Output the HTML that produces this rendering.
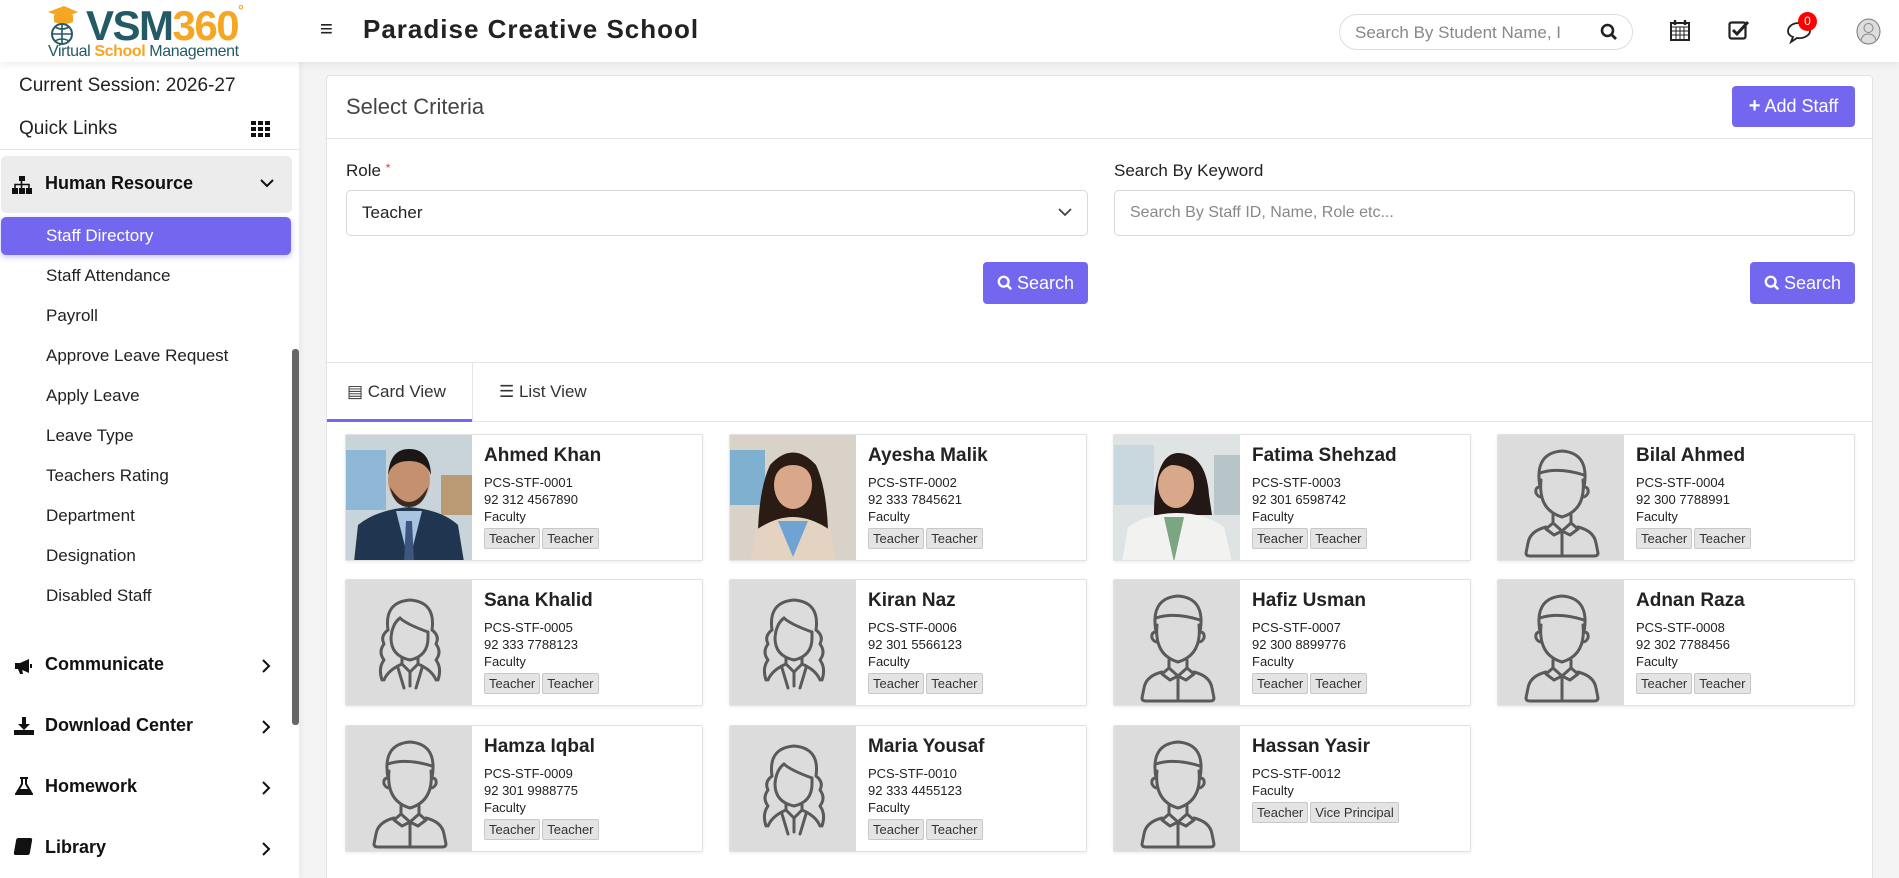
<!DOCTYPE html>
<html style="width:1899px;height:878px;overflow:hidden"><head><meta charset="utf-8">
<style>
*{box-sizing:border-box;margin:0;padding:0}
body{width:1899px;height:878px;overflow:hidden;background:#f4f4f5;font-family:"Liberation Sans",sans-serif;color:#222;position:relative}
.abs{position:absolute}
#hdr{left:0;top:0;width:1899px;height:62px;background:#fff;box-shadow:0 2px 8px rgba(0,0,0,.08);z-index:5}
#side{left:0;top:62px;width:299px;height:816px;background:#fff;box-shadow:2px 0 6px rgba(0,0,0,.05)}
.sub{position:absolute;left:46px;font-size:17px;color:#222}
.mi{position:absolute;left:45px;font-size:18px;font-weight:bold;color:#111}
.chev{position:absolute;left:262px}
#panel{left:326px;top:75px;width:1547px;height:803px;background:#fff;border:1px solid #e3e3e3;border-bottom:none;border-radius:4px 4px 0 0}
.btn{position:absolute;background:#7367f0;color:#fff;border-radius:4px;font-size:18px;display:flex;align-items:center;justify-content:center}
.inp{position:absolute;height:46px;border:1px solid #d8d8d8;border-radius:5px;font-size:17px;padding:0 15px;display:flex;align-items:center}
.card{position:absolute;width:358px;height:127px;background:#fff;border:1px solid #e2e2e2;box-shadow:0 1px 3px rgba(0,0,0,.08);border-radius:2px;overflow:hidden}
.ph{position:absolute;left:0;top:0;width:126px;height:127px;background:#dcdcdc}
.inf{position:absolute;left:138px;top:6px}
.nm{font-size:19px;font-weight:bold;color:#222;height:30px;line-height:30px}
.dt{font-size:13px;line-height:17px;margin-top:3px;color:#222}
.tg{display:inline-block;background:#e4e4e4;border:1px solid #c8c8c8;border-radius:2px;font-size:13px;padding:1px 4px;margin-top:3px;margin-right:2px;color:#333}
.dl{line-height:17px}
</style></head><body>

<div id="hdr" class="abs">
  <svg class="abs" style="left:44px;top:4px" width="34" height="42" viewBox="0 0 34 42">
    <path d="M4 8 L20 2 L34 8 L20 14 Z" fill="#f5a623"/><path d="M10 11 V18 Q20 22 29 18 V11" fill="#f5a623"/>
    <circle cx="18" cy="30" r="10" fill="none" stroke="#245a66" stroke-width="2"/><path d="M8 30 H28 M18 20 V40 M11 23 Q18 27 25 23 M11 37 Q18 33 25 37" stroke="#245a66" stroke-width="1.6" fill="none"/>
  </svg>
  <div class="abs" style="left:86px;top:2px;font-size:42px;font-weight:900;color:#245a66;letter-spacing:-1.5px">VSM<span style="color:#f5a623">360</span><span style="color:#f5a623;font-size:14px;vertical-align:top">°</span></div>
  <div class="abs" style="left:48px;top:43px;font-size:16px;color:#245a66;letter-spacing:-.4px">Virtual <b style="color:#f5a623">School</b> Management</div>
  <div class="abs" style="left:320px;top:16px;font-size:22px;font-weight:bold">≡</div>
  <div class="abs" style="left:363px;top:14px;font-size:26px;font-weight:bold;letter-spacing:1px;color:#222">Paradise Creative School</div>
  <div class="abs" style="left:1339px;top:14px;width:294px;height:36px;border:1px solid #ddd;border-radius:18px;font-size:17px;color:#888;padding:8px 0 0 15px">Search By Student Name, I</div>
  <svg class="abs" style="left:1600px;top:23px" width="18" height="18" viewBox="0 0 18 18"><circle cx="7.5" cy="7.5" r="5.5" fill="none" stroke="#222" stroke-width="2.6"/><path d="M11.5 11.5 L16 16" stroke="#222" stroke-width="2.8"/></svg>
  <svg class="abs" style="left:1670px;top:19px" width="20" height="22" viewBox="0 0 20 22"><rect x="1" y="4" width="18" height="17" fill="none" stroke="#222" stroke-width="2"/><path d="M1 8 H19 M1 12 H19 M1 16 H19 M6 8 V21 M10 8 V21 M14 8 V21" stroke="#222" stroke-width="1"/><path d="M5 1 V6 M15 1 V6" stroke="#222" stroke-width="2.4"/></svg>
  <svg class="abs" style="left:1728px;top:19px" width="22" height="22" viewBox="0 0 22 22"><rect x="1.5" y="3.5" width="16" height="16" rx="2" fill="none" stroke="#222" stroke-width="2.2"/><path d="M5 11 L9 15 L20 3" fill="none" stroke="#222" stroke-width="3"/></svg>
  <svg class="abs" style="left:1786px;top:20px" width="26" height="24" viewBox="0 0 26 24"><path d="M13 3 C6 3 2 7 2 11 C2 14 4 16 7 17 L5 22 L11 18 C18 19 24 15 24 11 C24 7 19 3 13 3 Z" fill="none" stroke="#222" stroke-width="1.8"/></svg>
  <div class="abs" style="left:1798px;top:12px;width:19px;height:19px;border-radius:50%;background:#f00;color:#fff;font-size:12px;text-align:center;line-height:19px">0</div>
  <svg class="abs" style="left:1856px;top:18px" width="25" height="27" viewBox="0 0 25 27"><ellipse cx="12.5" cy="13.5" rx="11.5" ry="12.5" fill="#ddd" stroke="#777"/><circle cx="12.5" cy="10" r="4.5" fill="none" stroke="#888"/><path d="M5 23 Q6 16 12.5 16 Q19 16 20 23" fill="none" stroke="#888"/></svg>
</div>

<div id="side" class="abs">
  <div class="abs" style="left:19px;top:13px;font-size:19px">Current Session: 2026-27</div>
  <div class="abs" style="left:19px;top:56px;font-size:19px">Quick Links</div>
  <svg class="abs" style="left:251px;top:59px" width="20" height="17" viewBox="0 0 20 17"><g fill="#111"><rect x="0" y="0" width="5" height="4"/><rect x="7" y="0" width="5" height="4"/><rect x="14" y="0" width="5" height="4"/><rect x="0" y="6" width="5" height="4"/><rect x="7" y="6" width="5" height="4"/><rect x="14" y="6" width="5" height="4"/><rect x="0" y="12" width="5" height="4"/><rect x="7" y="12" width="5" height="4"/><rect x="14" y="12" width="5" height="4"/></g></svg>
  <div class="abs" style="left:0;top:87px;width:299px;height:1px;background:#e5e5e5"></div>
  <div class="abs" style="left:1px;top:94px;width:291px;height:57px;background:#ececec;border-radius:5px"></div>
  <svg class="abs" style="left:12px;top:114px" width="20" height="18" viewBox="0 0 20 18"><g fill="#111"><rect x="7" y="0" width="6" height="5"/><rect x="0" y="12" width="6" height="6"/><rect x="7" y="12" width="6" height="6"/><rect x="14" y="12" width="6" height="6"/><path d="M9.5 5 V12 M3 12 V8.5 H17 V12" stroke="#111" stroke-width="1.6" fill="none"/></g></svg>
  <div class="mi" style="top:111px">Human Resource</div>
  <svg class="abs" style="left:260px;top:117px" width="14" height="9" viewBox="0 0 14 9"><path d="M1 1 L7 7 L13 1" fill="none" stroke="#111" stroke-width="2"/></svg>
  <div class="abs" style="left:1px;top:155px;width:290px;height:38px;background:#7367f0;border-radius:5px;box-shadow:0 2px 6px rgba(115,103,240,.4)"></div>
  <div class="sub" style="top:164px;color:#fff">Staff Directory</div>
  <div class="sub" style="top:204px">Staff Attendance</div>
  <div class="sub" style="top:244px">Payroll</div>
  <div class="sub" style="top:284px">Approve Leave Request</div>
  <div class="sub" style="top:324px">Apply Leave</div>
  <div class="sub" style="top:364px">Leave Type</div>
  <div class="sub" style="top:404px">Teachers Rating</div>
  <div class="sub" style="top:444px">Department</div>
  <div class="sub" style="top:484px">Designation</div>
  <div class="sub" style="top:524px">Disabled Staff</div>
  <div class="abs" style="left:292px;top:287px;width:7px;height:376px;background:#666;border-radius:3px"></div>
  <svg class="abs" style="left:14px;top:596px" width="20" height="17" viewBox="0 0 20 17"><path d="M1 5 H6 L15 1 V15 L6 11 H1 Z" fill="#111"/><path d="M4 11 L6 16 H9 L8 11" fill="#111"/><path d="M17 6 V10" stroke="#111" stroke-width="2"/></svg>
  <div class="mi" style="top:592px">Communicate</div>
  <svg class="chev" style="top:597px" width="9" height="14" viewBox="0 0 9 14"><path d="M1 1 L7 7 L1 13" fill="none" stroke="#111" stroke-width="2"/></svg>
  <svg class="abs" style="left:14px;top:655px" width="20" height="18" viewBox="0 0 20 18"><path d="M8 0 H12 V7 H16 L10 13 L4 7 H8 Z" fill="#111"/><rect x="0" y="13" width="20" height="5" fill="#111"/></svg>
  <div class="mi" style="top:653px">Download Center</div>
  <svg class="chev" style="top:658px" width="9" height="14" viewBox="0 0 9 14"><path d="M1 1 L7 7 L1 13" fill="none" stroke="#111" stroke-width="2"/></svg>
  <svg class="abs" style="left:15px;top:715px" width="18" height="19" viewBox="0 0 18 19"><path d="M5 1 H13 M7 1 V7 L1 17 H17 L11 7 V1" fill="none" stroke="#111" stroke-width="2"/><path d="M4 12 H14 L16 17 H2 Z" fill="#111"/></svg>
  <div class="mi" style="top:714px">Homework</div>
  <svg class="chev" style="top:719px" width="9" height="14" viewBox="0 0 9 14"><path d="M1 1 L7 7 L1 13" fill="none" stroke="#111" stroke-width="2"/></svg>
  <div class="abs" style="left:15px;top:776px;width:16px;height:17px;background:#111;border-radius:2px;transform:skewX(-10deg)"></div>
  <div class="mi" style="top:775px">Library</div>
  <svg class="chev" style="top:780px" width="9" height="14" viewBox="0 0 9 14"><path d="M1 1 L7 7 L1 13" fill="none" stroke="#111" stroke-width="2"/></svg>
</div>

<div id="panel" class="abs">
  <div class="abs" style="left:19px;top:18px;font-size:22px;color:#444">Select Criteria</div>
  <div class="btn" style="left:1405px;top:10px;width:123px;height:41px;font-size:18px"><b style="font-size:20px;margin-right:4px">+</b>Add Staff</div>
  <div class="abs" style="left:0;top:62px;width:1545px;height:1px;background:#e5e5e5"></div>
  <div class="abs" style="left:19px;top:85px;font-size:17px">Role <span style="color:#e33;font-size:12px;vertical-align:top">*</span></div>
  <div class="inp" style="left:19px;top:114px;width:742px">Teacher</div>
  <svg class="abs" style="left:731px;top:132px" width="14" height="9" viewBox="0 0 14 9"><path d="M1 1 L7 7 L13 1" fill="none" stroke="#444" stroke-width="1.8"/></svg>
  <div class="abs" style="left:787px;top:85px;font-size:17px">Search By Keyword</div>
  <div class="inp" style="left:787px;top:114px;width:741px;color:#888;font-size:16px">Search By Staff ID, Name, Role etc...</div>
  <div class="btn" style="left:656px;top:186px;width:105px;height:42px"><svg width="16" height="16" viewBox="0 0 18 18" style="margin-right:4px"><circle cx="7.5" cy="7.5" r="5.5" fill="none" stroke="#fff" stroke-width="2.6"/><path d="M11.5 11.5 L16 16" stroke="#fff" stroke-width="2.8"/></svg>Search</div>
  <div class="btn" style="left:1423px;top:186px;width:105px;height:42px"><svg width="16" height="16" viewBox="0 0 18 18" style="margin-right:4px"><circle cx="7.5" cy="7.5" r="5.5" fill="none" stroke="#fff" stroke-width="2.6"/><path d="M11.5 11.5 L16 16" stroke="#fff" stroke-width="2.8"/></svg>Search</div>
  <div class="abs" style="left:0;top:286px;width:1545px;height:1px;background:#e5e5e5"></div>
  <div class="abs" style="left:145px;top:287px;width:1px;height:58px;background:#e5e5e5"></div>
  <div class="abs" style="left:0;top:345px;width:1545px;height:1px;background:#e5e5e5"></div>
  <div class="abs" style="left:0;top:343px;width:145px;height:3px;background:#7367f0"></div>
  <div class="abs" style="left:20px;top:306px;font-size:17px;color:#333">▤ Card View</div>
  <div class="abs" style="left:172px;top:306px;font-size:17px;color:#333">☰ List View</div>
</div>

<div class="card" style="left:345px;top:434px"><div class="ph"><svg width="126" height="127"><rect width="126" height="127" fill="#c8d3da"/><rect x="0" y="15" width="40" height="60" fill="#8fb8d6"/><rect x="95" y="40" width="31" height="40" fill="#b99a74"/><path d="M8 127 L12 90 Q30 75 63 72 Q96 75 112 90 L118 127 Z" fill="#1f3550"/><path d="M50 76 L63 127 L76 76 Z" fill="#a8c4e0"/><path d="M60 86 L66 86 L68 127 L58 127 Z" fill="#3d5680"/><ellipse cx="63" cy="45" rx="21" ry="26" fill="#c49070"/><path d="M42 40 Q44 14 63 14 Q84 14 85 40 Q80 26 63 26 Q46 26 42 40 Z" fill="#1c1714"/><path d="M44 52 Q63 82 82 52 Q78 72 63 72 Q48 72 44 52Z" fill="#3a2a22"/></svg></div><div class="inf"><div class="nm">Ahmed Khan</div><div class="dt"><div class="dl">PCS-STF-0001</div><div class="dl">92 312 4567890</div><div class="dl">Faculty</div><span class="tg">Teacher</span><span class="tg">Teacher</span></div></div></div>

<div class="card" style="left:729px;top:434px"><div class="ph"><svg width="126" height="127"><rect width="126" height="127" fill="#d9d2c8"/><rect x="0" y="15" width="35" height="55" fill="#7fb0cf"/><path d="M28 127 Q26 60 40 30 Q63 5 86 30 Q100 60 98 127 Z" fill="#2a1b14"/><path d="M20 127 L26 95 Q45 82 63 82 Q81 82 100 95 L106 127 Z" fill="#e3d3c0"/><path d="M48 86 L63 122 L78 86 Z" fill="#6fa3d4"/><ellipse cx="63" cy="50" rx="19" ry="24" fill="#d9a88a"/><path d="M44 45 Q50 22 63 22 Q76 22 82 45 Q78 30 63 30 Q48 30 44 45Z" fill="#2a1b14"/></svg></div><div class="inf"><div class="nm">Ayesha Malik</div><div class="dt"><div class="dl">PCS-STF-0002</div><div class="dl">92 333 7845621</div><div class="dl">Faculty</div><span class="tg">Teacher</span><span class="tg">Teacher</span></div></div></div>

<div class="card" style="left:1113px;top:434px"><div class="ph"><svg width="126" height="127"><rect width="126" height="127" fill="#dfe3e4"/><rect x="0" y="10" width="40" height="60" fill="#c9d8df"/><rect x="100" y="20" width="26" height="60" fill="#b7c4c8"/><path d="M40 80 Q40 20 63 18 Q92 18 95 60 L98 80 Z" fill="#231815"/><path d="M8 127 L14 92 Q35 78 63 78 Q91 78 110 92 L118 127 Z" fill="#f2f2f0"/><path d="M50 82 L60 127 L70 82 Z" fill="#7aa782"/><ellipse cx="62" cy="50" rx="18" ry="23" fill="#d9a88a"/><path d="M44 45 Q48 22 63 22 Q78 24 82 42 Q72 30 58 30 Q48 32 44 45Z" fill="#231815"/></svg></div><div class="inf"><div class="nm">Fatima Shehzad</div><div class="dt"><div class="dl">PCS-STF-0003</div><div class="dl">92 301 6598742</div><div class="dl">Faculty</div><span class="tg">Teacher</span><span class="tg">Teacher</span></div></div></div>

<div class="card" style="left:1497px;top:434px"><div class="ph"><svg width="126" height="127" viewBox="0 0 126 127" fill="none" stroke="#5a5a5a" stroke-width="3" stroke-linecap="round" stroke-linejoin="round"><path d="M42 52 Q36 18 64 16 Q92 18 86 52"/><path d="M42 38 Q60 32 86 40"/><path d="M43 45 Q40 75 64 82 Q88 75 85 45"/><path d="M42 52 Q37 52 38 58 Q40 62 43 62 M86 52 Q91 52 90 58 Q88 62 85 62"/><path d="M55 80 V88 L64 96 L73 88 V80"/><path d="M55 88 L48 94 L56 100 L64 96 L72 100 L80 94 L73 88"/><path d="M48 92 Q32 96 30 108 L28 118 Q28 121 32 121 H96 Q100 121 100 118 L98 108 Q96 96 80 92"/><path d="M64 96 V119"/></svg></div><div class="inf"><div class="nm">Bilal Ahmed</div><div class="dt"><div class="dl">PCS-STF-0004</div><div class="dl">92 300 7788991</div><div class="dl">Faculty</div><span class="tg">Teacher</span><span class="tg">Teacher</span></div></div></div>

<div class="card" style="left:345px;top:579px"><div class="ph"><svg width="126" height="127" viewBox="0 0 126 127" fill="none" stroke="#5a5a5a" stroke-width="3" stroke-linecap="round" stroke-linejoin="round"><path d="M42 50 Q38 22 64 20 Q90 22 86 50 Q94 56 90 64 Q96 72 90 80 Q96 88 92 100"/><path d="M42 50 Q34 56 38 64 Q32 72 38 80 Q32 88 36 100"/><path d="M54 38 Q60 44 82 52"/><path d="M54 38 Q46 44 45 58 Q45 76 64 80 Q82 76 82 58 V52"/><path d="M56 78 V84 L64 92 L72 84 V78"/><path d="M38 100 Q42 90 56 84 M90 100 Q86 90 72 84"/><path d="M52 88 L58 108 M76 88 L70 108 M64 92 V106"/></svg></div><div class="inf"><div class="nm">Sana Khalid</div><div class="dt"><div class="dl">PCS-STF-0005</div><div class="dl">92 333 7788123</div><div class="dl">Faculty</div><span class="tg">Teacher</span><span class="tg">Teacher</span></div></div></div>

<div class="card" style="left:729px;top:579px"><div class="ph"><svg width="126" height="127" viewBox="0 0 126 127" fill="none" stroke="#5a5a5a" stroke-width="3" stroke-linecap="round" stroke-linejoin="round"><path d="M42 50 Q38 22 64 20 Q90 22 86 50 Q94 56 90 64 Q96 72 90 80 Q96 88 92 100"/><path d="M42 50 Q34 56 38 64 Q32 72 38 80 Q32 88 36 100"/><path d="M54 38 Q60 44 82 52"/><path d="M54 38 Q46 44 45 58 Q45 76 64 80 Q82 76 82 58 V52"/><path d="M56 78 V84 L64 92 L72 84 V78"/><path d="M38 100 Q42 90 56 84 M90 100 Q86 90 72 84"/><path d="M52 88 L58 108 M76 88 L70 108 M64 92 V106"/></svg></div><div class="inf"><div class="nm">Kiran Naz</div><div class="dt"><div class="dl">PCS-STF-0006</div><div class="dl">92 301 5566123</div><div class="dl">Faculty</div><span class="tg">Teacher</span><span class="tg">Teacher</span></div></div></div>

<div class="card" style="left:1113px;top:579px"><div class="ph"><svg width="126" height="127" viewBox="0 0 126 127" fill="none" stroke="#5a5a5a" stroke-width="3" stroke-linecap="round" stroke-linejoin="round"><path d="M42 52 Q36 18 64 16 Q92 18 86 52"/><path d="M42 38 Q60 32 86 40"/><path d="M43 45 Q40 75 64 82 Q88 75 85 45"/><path d="M42 52 Q37 52 38 58 Q40 62 43 62 M86 52 Q91 52 90 58 Q88 62 85 62"/><path d="M55 80 V88 L64 96 L73 88 V80"/><path d="M55 88 L48 94 L56 100 L64 96 L72 100 L80 94 L73 88"/><path d="M48 92 Q32 96 30 108 L28 118 Q28 121 32 121 H96 Q100 121 100 118 L98 108 Q96 96 80 92"/><path d="M64 96 V119"/></svg></div><div class="inf"><div class="nm">Hafiz Usman</div><div class="dt"><div class="dl">PCS-STF-0007</div><div class="dl">92 300 8899776</div><div class="dl">Faculty</div><span class="tg">Teacher</span><span class="tg">Teacher</span></div></div></div>

<div class="card" style="left:1497px;top:579px"><div class="ph"><svg width="126" height="127" viewBox="0 0 126 127" fill="none" stroke="#5a5a5a" stroke-width="3" stroke-linecap="round" stroke-linejoin="round"><path d="M42 52 Q36 18 64 16 Q92 18 86 52"/><path d="M42 38 Q60 32 86 40"/><path d="M43 45 Q40 75 64 82 Q88 75 85 45"/><path d="M42 52 Q37 52 38 58 Q40 62 43 62 M86 52 Q91 52 90 58 Q88 62 85 62"/><path d="M55 80 V88 L64 96 L73 88 V80"/><path d="M55 88 L48 94 L56 100 L64 96 L72 100 L80 94 L73 88"/><path d="M48 92 Q32 96 30 108 L28 118 Q28 121 32 121 H96 Q100 121 100 118 L98 108 Q96 96 80 92"/><path d="M64 96 V119"/></svg></div><div class="inf"><div class="nm">Adnan Raza</div><div class="dt"><div class="dl">PCS-STF-0008</div><div class="dl">92 302 7788456</div><div class="dl">Faculty</div><span class="tg">Teacher</span><span class="tg">Teacher</span></div></div></div>

<div class="card" style="left:345px;top:725px"><div class="ph"><svg width="126" height="127" viewBox="0 0 126 127" fill="none" stroke="#5a5a5a" stroke-width="3" stroke-linecap="round" stroke-linejoin="round"><path d="M42 52 Q36 18 64 16 Q92 18 86 52"/><path d="M42 38 Q60 32 86 40"/><path d="M43 45 Q40 75 64 82 Q88 75 85 45"/><path d="M42 52 Q37 52 38 58 Q40 62 43 62 M86 52 Q91 52 90 58 Q88 62 85 62"/><path d="M55 80 V88 L64 96 L73 88 V80"/><path d="M55 88 L48 94 L56 100 L64 96 L72 100 L80 94 L73 88"/><path d="M48 92 Q32 96 30 108 L28 118 Q28 121 32 121 H96 Q100 121 100 118 L98 108 Q96 96 80 92"/><path d="M64 96 V119"/></svg></div><div class="inf"><div class="nm">Hamza Iqbal</div><div class="dt"><div class="dl">PCS-STF-0009</div><div class="dl">92 301 9988775</div><div class="dl">Faculty</div><span class="tg">Teacher</span><span class="tg">Teacher</span></div></div></div>

<div class="card" style="left:729px;top:725px"><div class="ph"><svg width="126" height="127" viewBox="0 0 126 127" fill="none" stroke="#5a5a5a" stroke-width="3" stroke-linecap="round" stroke-linejoin="round"><path d="M42 50 Q38 22 64 20 Q90 22 86 50 Q94 56 90 64 Q96 72 90 80 Q96 88 92 100"/><path d="M42 50 Q34 56 38 64 Q32 72 38 80 Q32 88 36 100"/><path d="M54 38 Q60 44 82 52"/><path d="M54 38 Q46 44 45 58 Q45 76 64 80 Q82 76 82 58 V52"/><path d="M56 78 V84 L64 92 L72 84 V78"/><path d="M38 100 Q42 90 56 84 M90 100 Q86 90 72 84"/><path d="M52 88 L58 108 M76 88 L70 108 M64 92 V106"/></svg></div><div class="inf"><div class="nm">Maria Yousaf</div><div class="dt"><div class="dl">PCS-STF-0010</div><div class="dl">92 333 4455123</div><div class="dl">Faculty</div><span class="tg">Teacher</span><span class="tg">Teacher</span></div></div></div>

<div class="card" style="left:1113px;top:725px"><div class="ph"><svg width="126" height="127" viewBox="0 0 126 127" fill="none" stroke="#5a5a5a" stroke-width="3" stroke-linecap="round" stroke-linejoin="round"><path d="M42 52 Q36 18 64 16 Q92 18 86 52"/><path d="M42 38 Q60 32 86 40"/><path d="M43 45 Q40 75 64 82 Q88 75 85 45"/><path d="M42 52 Q37 52 38 58 Q40 62 43 62 M86 52 Q91 52 90 58 Q88 62 85 62"/><path d="M55 80 V88 L64 96 L73 88 V80"/><path d="M55 88 L48 94 L56 100 L64 96 L72 100 L80 94 L73 88"/><path d="M48 92 Q32 96 30 108 L28 118 Q28 121 32 121 H96 Q100 121 100 118 L98 108 Q96 96 80 92"/><path d="M64 96 V119"/></svg></div><div class="inf"><div class="nm">Hassan Yasir</div><div class="dt"><div class="dl">PCS-STF-0012</div><div class="dl">Faculty</div><span class="tg">Teacher</span><span class="tg">Vice Principal</span></div></div></div>

</body></html>
